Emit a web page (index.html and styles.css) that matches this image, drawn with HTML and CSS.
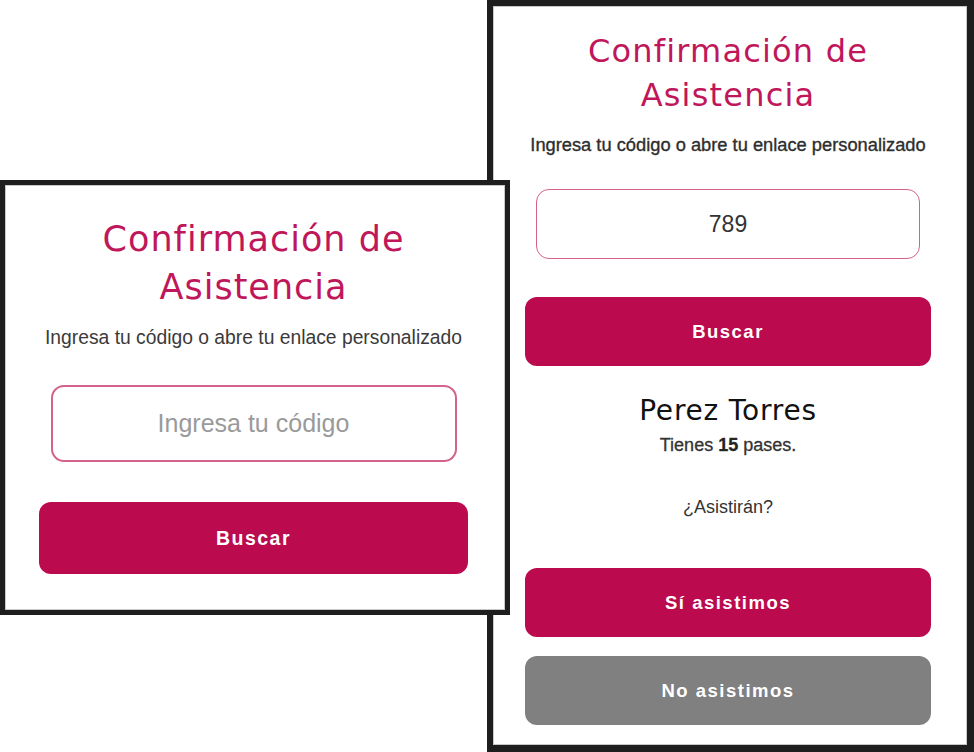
FILE: index.html
```html
<!DOCTYPE html>
<html lang="es">
<head>
<meta charset="utf-8">
<title>Confirmación de Asistencia</title>
<link rel="stylesheet" href="styles.css">
</head>
<body>
<div class="canvas">
  <section class="win win-right">
    <h1 class="title title-sm">Confirmación de<br>Asistencia</h1>
    <p class="lead lead-sm">Ingresa tu código o abre tu enlace personalizado</p>
    <div class="field field-sm"><span class="value">789</span></div>
    <button class="btn btn-sm btn-search">Buscar</button>
    <h2 class="guest">Perez Torres</h2>
    <p class="passes">Tienes <b>15</b> pases.</p>
    <p class="ask">¿Asistirán?</p>
    <button class="btn btn-sm btn-yes">Sí asistimos</button>
    <button class="btn btn-sm btn-no">No asistimos</button>
  </section>
  <section class="win win-left">
    <h1 class="title title-lg">Confirmación de<br>Asistencia</h1>
    <p class="lead lead-lg">Ingresa tu código o abre tu enlace personalizado</p>
    <div class="field field-lg"><span class="placeholder">Ingresa tu código</span></div>
    <button class="btn btn-lg btn-search-lg">Buscar</button>
  </section>
</div>
</body>
</html>
```
FILE: styles.css
```css
* { box-sizing: border-box; }
html, body { margin: 0; padding: 0; background: #fff; }
.canvas { position: relative; width: 974px; height: 752px; overflow: hidden; }

.win {
  position: absolute;
  background: #fff;
  border: 6px solid #1e1e1e;
  box-shadow: inset 0 0 0 1px #c8c8c8;
  display: flex;
  flex-direction: column;
  align-items: stretch;
  text-align: center;
  font-family: "Liberation Sans", Arial, sans-serif;
}
.win-right {
  left: 487px; top: 0; width: 487px; height: 752px;
  border-width: 6px 7px 7px 6px;
  padding: 23px 36px 0 32px;
}
.win-left {
  left: 0; top: 180px; width: 510px; height: 435px;
  border-width: 5px;
  padding: 30px 37px 0 34px;
}

.title {
  margin: 0;
  font-family: "DejaVu Sans", sans-serif;
  font-weight: normal;
  color: #c0175a;
}
.title-sm { font-size: 32px; line-height: 44px; letter-spacing: 1.2px; }
.title-lg { font-size: 35px; line-height: 48px; letter-spacing: 1px; }

.lead { margin: 0; color: #333; }
.lead-sm { font-size: 18.3px; line-height: 22px; margin-top: 17px; color: #2e2e2e; -webkit-text-stroke: 0.35px #2e2e2e; }
.lead-lg { font-size: 19.3px; line-height: 23px; margin-top: 15px; color: #3a3a3a; }

.field {
  display: flex;
  align-items: center;
  justify-content: center;
  align-self: center;
  background: #fff;
  border: 2px solid #d4628c;
  border-radius: 13px;
}
.field-sm { width: 384px; height: 70px; margin-top: 33px; border-width: 1.5px; }
.field-lg { width: 406px; height: 77px; margin-top: 36px; }
.value { font-size: 23px; color: #333; }
.placeholder { font-size: 25px; color: #9a9a9a; }

.btn {
  display: block;
  width: 100%;
  border: 0;
  border-radius: 12px;
  color: #fff;
  font-family: "Liberation Sans", Arial, sans-serif;
  font-weight: bold;
  letter-spacing: 1.5px;
  padding: 0;
}
.btn-sm { height: 69px; font-size: 18.5px; background: #bb0a4e; }
.btn-lg { height: 72px; font-size: 19.5px; background: #bb0a4e; margin-top: 40px; }
.btn-search { margin-top: 38px; }
.btn-yes { margin-top: 51px; }
.btn-no { margin-top: 19px; background: #808080; }

.guest {
  margin: 28px 0 0;
  font-family: "DejaVu Sans", sans-serif;
  font-weight: normal;
  font-size: 28px;
  line-height: 34px;
  letter-spacing: 0.8px;
  color: #111;
}
.passes { margin: 7px 0 0; font-size: 18px; line-height: 20px; color: #333; -webkit-text-stroke: 0.3px #333; }
.passes b { color: #222; }
.ask { margin: 42px 0 0; font-size: 18px; line-height: 20px; color: #333; }
```
